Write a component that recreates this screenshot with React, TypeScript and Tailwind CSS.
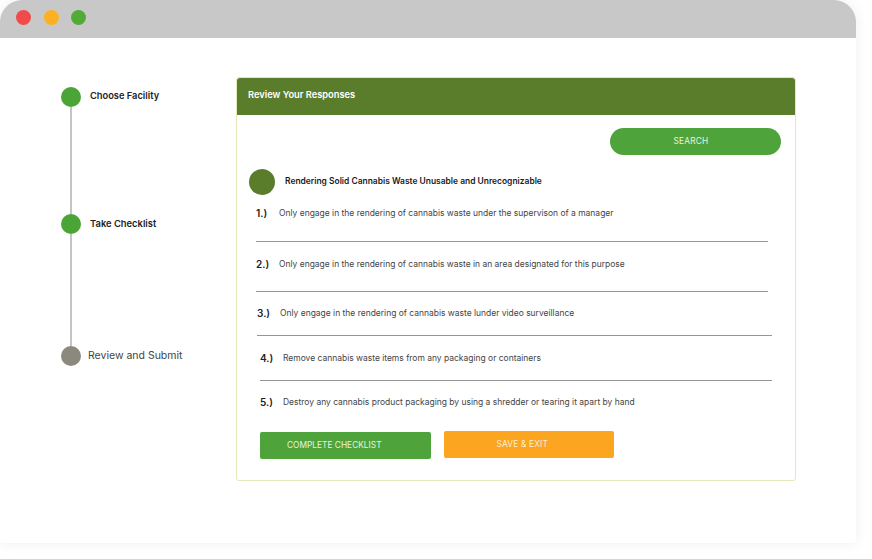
const texts = [
  "Only engage in the rendering of cannabis waste under the supervison of a manager",
  "Only engage in the rendering of cannabis waste in an area designated for this purpose",
  "Only engage in the rendering of cannabis waste lunder video surveillance",
];

function Row({ n, t, gap }: { n: string; t: string; gap: string }) {
  return (
    <div className="flex items-center h-[14px]">
      <span className={`text-[10px] font-semibold text-[#222] ${gap}`}>{n}</span>
      <span className="text-[8.47px] text-[#444] whitespace-nowrap">{t}</span>
    </div>
  );
}

export default function App() {
  return (
    <div className="w-[872px] h-[559px] bg-white overflow-hidden font-['Inter','Liberation_Sans',sans-serif]">
      <div className="w-[856px] h-[543px] bg-white rounded-t-[22px] shadow-[0_0_14px_rgba(0,0,0,0.07)] flex flex-col">
        <div className="h-[38px] bg-[#c8c8c8] rounded-t-[22px] flex items-center pl-[16px] gap-[12.5px] shrink-0 pb-[3px]">
          <div className="w-[15px] h-[15px] rounded-full bg-[#f04b4b]" />
          <div className="w-[15px] h-[15px] rounded-full bg-[#fdb022]" />
          <div className="w-[15px] h-[15px] rounded-full bg-[#52ab35]" />
        </div>
        <div className="flex pt-[39px] pl-[61px]">
          <div className="w-[175px] shrink-0 pt-[10px]">
            <div className="flex items-center h-[20px]">
              <div className="w-[20px] h-[20px] rounded-full bg-[#4ba436] shrink-0" />
              <span className="ml-[9px] text-[9.3px] font-semibold text-[#222] -mt-[2px]">Choose Facility</span>
            </div>
            <div className="w-[2px] h-[107px] ml-[9px] bg-[#c4c4c4]" />
            <div className="flex items-center h-[20px]">
              <div className="w-[20px] h-[20px] rounded-full bg-[#4ba436] shrink-0" />
              <span className="ml-[9px] text-[9.4px] font-semibold text-[#222]">Take Checklist</span>
            </div>
            <div className="w-[2px] h-[112px] ml-[9px] bg-[#c4c4c4]" />
            <div className="flex items-center h-[20px]">
              <div className="w-[20px] h-[20px] rounded-full bg-[#8b887e] shrink-0" />
              <span className="ml-[7px] text-[10.5px] text-[#444] -mt-[1px]">Review and Submit</span>
            </div>
          </div>
          <div className="w-[560px] h-[404px] border border-[#e2eab8] rounded-[3px] flex flex-col shrink-0">
            <div className="h-[37px] bg-[#5a7d2c] rounded-t-[3px] flex items-center pl-[11px] pb-[3px] shrink-0">
              <span className="text-[9.3px] font-semibold text-white">Review Your Responses</span>
            </div>
            <div className="flex justify-end pr-[14px] pt-[13px]">
              <div className="w-[171px] h-[27px] rounded-full bg-[#4ea33b] flex items-center justify-center pr-[9px] text-[8.3px] text-[#e8f3e4] tracking-[0.2px]">
                SEARCH
              </div>
            </div>
            <div className="flex items-center pl-[12px] mt-[14px] h-[26px]">
              <div className="w-[26px] h-[26px] rounded-full bg-[#5a7d2c] shrink-0" />
              <span className="ml-[10px] text-[8.45px] font-semibold text-[#1a1a1a] -mt-[1px]">Rendering Solid Cannabis Waste Unusable and Unrecognizable</span>
            </div>
            <div className="mt-[11px] ml-[19px] w-[512px] h-[36px] border-b border-[#969696]">
              <Row n="1.)" gap="w-[23px]" t={texts[0]} />
            </div>
            <div className="mt-[15px] ml-[19px] w-[512px] h-[35px] border-b border-[#969696]">
              <Row n="2.)" gap="w-[23px]" t={texts[1]} />
            </div>
            <div className="mt-[14px] ml-[20px] w-[515px] h-[30px] border-b border-[#969696]">
              <Row n="3.)" gap="w-[23px]" t={texts[2]} />
            </div>
            <div className="mt-[15px] ml-[23px] w-[512px] h-[30px] border-b border-[#969696]">
              <Row n="4.)" gap="w-[23px]" t="Remove cannabis waste items from any packaging or containers" />
            </div>
            <div className="mt-[14px] ml-[23px]">
              <Row n="5.)" gap="w-[23px]" t="Destroy any cannabis product packaging by using a shredder or tearing it apart by hand" />
            </div>
            <div className="flex items-start ml-[23px] mt-[22px] gap-[13px]">
              <div className="w-[170.5px] h-[27px] mt-[1px] rounded-[2px] bg-[#4ea33b] flex items-center pl-[27px] text-[8.35px] text-[#e8f3e4]">
                COMPLETE CHECKLIST
              </div>
              <div className="w-[170.5px] h-[27px] rounded-[2px] bg-[#fba520] flex items-center justify-center pr-[13px] text-[8.3px] text-[#fdf0d8] tracking-[0.2px]">
                SAVE &amp; EXIT
              </div>
            </div>
          </div>
        </div>
      </div>
    </div>
  );
}
